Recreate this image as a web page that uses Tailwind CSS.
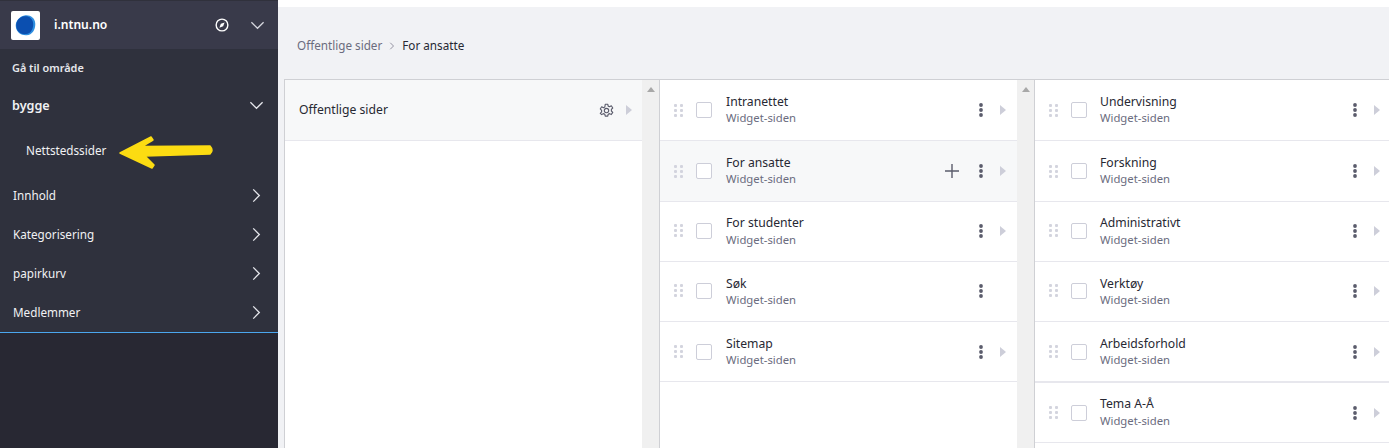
<!DOCTYPE html>
<html lang="no">
<head>
    <meta charset="UTF-8">
    <title>Nettstedssider</title>
    <script src="https://cdn.jsdelivr.net/npm/@tailwindcss/browser@4"></script>
</head>
<body class="overflow-hidden bg-white font-['Noto_Sans',sans-serif] text-[12.2px] text-[#272833]">
<svg width="0" height="0" class="absolute">
    <symbol id="down" viewBox="0 0 16 16"><path d="M1.500 4.500l6.500 6.500 6.500-6.500" fill="none" stroke="currentColor" stroke-width="1.400"/></symbol>
    <symbol id="right" viewBox="0 0 16 16"><path d="M4.500 1.500l6.500 6.500-6.500 6.500" fill="none" stroke="currentColor" stroke-width="1.400"/></symbol>
    <symbol id="caret" viewBox="0 0 6 10"><path d="M0 0l6 5-6 5z" fill="#cdced9"/></symbol>
    <symbol id="dots" viewBox="0 0 4 14"><circle cx="2" cy="2" r="1.900"/><circle cx="2" cy="7" r="1.900"/><circle cx="2" cy="12" r="1.900"/></symbol>
    <symbol id="grip" viewBox="0 0 9 13"><g fill="#d3d4de"><rect width="3" height="3" rx="1"/><rect x="6" width="3" height="3" rx="1"/><rect y="5" width="3" height="3" rx="1"/><rect x="6" y="5" width="3" height="3" rx="1"/><rect y="10" width="3" height="3" rx="1"/><rect x="6" y="10" width="3" height="3" rx="1"/></g></symbol>
</svg>

<div class="flex h-[448px] w-[1389px]">
    <!-- sidebar -->
    <aside class="w-[278px] shrink-0 bg-[#282833] text-white">
        <div class="flex h-[49px] items-center border-t border-[#30313c] bg-[#393a4a] pl-[11px] pr-[13px]">
            <div class="flex h-[29px] w-[29px] items-center justify-center rounded-[2px] bg-white">
                <svg width="21" height="21" viewBox="0 0 20 20"><path d="M9 .5c5-1 10 2 10.300 7.500.3 5.500-2.500 11-8.300 11.300C6 19.600 1 16.500.7 10.500.5 6 4 1.500 9 .5z" fill="#2f8fe0"/><path d="M8.500 1.300c4.500-.8 8.500 1.800 8.800 6.700.3 5-2 9.500-6.800 10.200C6 18.800 1.500 16 1.200 10.500 1 6 4 2 8.500 1.300z" fill="#0b4fb0"/></svg>
            </div>
            <span class="ml-[14px] text-[12.100px] font-semibold">i.ntnu.no</span>
            <svg class="ml-auto" width="14" height="14" viewBox="0 0 16 16" fill="none" stroke="#fff" stroke-width="1.600"><circle cx="8" cy="8" r="6.700"/><path d="M11 5 9.300 9.300 5 11 6.700 6.700z" fill="#fff" stroke="none"/></svg>
            <svg class="ml-[21px] text-[#d5d6de]" width="15" height="15"><use href="#down"/></svg>
        </div>
        <div class="bg-[#2f313d]">
            <div class="flex h-[37px] items-center pl-[12px] pt-px text-[10.900px] font-semibold text-[#e6e7ec]">Gå til område</div>
            <div class="flex h-[39px] items-center justify-between pl-[12px] pr-[14px] text-[12.600px] font-semibold text-[#f1f1f4]"><span class="pt-px">bygge</span> <svg class="text-[#e6e7ec]" width="15" height="15"><use href="#down"/></svg></div>
            <div class="flex h-[51px] items-center pl-[26px] text-[11.700px] text-[#f1f1f4]">Nettstedssider</div>
            <div class="flex h-[39px] items-center justify-between pl-[13px] pr-[14px] text-[11.700px] text-[#f1f1f4]">Innhold <svg class="text-[#e6e7ec]" width="15" height="15"><use href="#right"/></svg></div>
            <div class="flex h-[39px] items-center justify-between pl-[13px] pr-[14px] text-[11.700px] text-[#f1f1f4]">Kategorisering <svg class="text-[#e6e7ec]" width="15" height="15"><use href="#right"/></svg></div>
            <div class="flex h-[39px] items-center justify-between pl-[13px] pr-[14px] text-[11.700px] text-[#f1f1f4]">papirkurv <svg class="text-[#e6e7ec]" width="15" height="15"><use href="#right"/></svg></div>
            <div class="flex h-[39px] items-center justify-between pl-[13px] pr-[14px] text-[11.700px] text-[#f1f1f4]">Medlemmer <svg class="text-[#e6e7ec]" width="15" height="15"><use href="#right"/></svg></div>
        </div>
        <div class="h-px bg-[#4ba6ee]"></div>
    </aside>

    <!-- main -->
    <main class="flex min-w-0 flex-1 flex-col pt-[7px]">
        <div class="flex-1 overflow-hidden bg-[#f1f2f5] pl-[6px]">
            <div class="flex h-[72px] items-center pl-[13px] pt-[5px] text-[11.700px]">
                <span class="text-[#6b6c7e]">Offentlige sider</span>
                <svg class="mx-[6px] text-[#6b6c7e]" width="8" height="8"><use href="#right"/></svg>
                <span>For ansatte</span>
            </div>
            <div class="flex h-[369px] border-t border-l border-[#cfd0d4] bg-white">
                <!-- column 1 -->
                <div class="flex w-[375px] shrink-0 border-r border-[#cfd0d4]">
                    <div class="flex-1">
                        <div class="flex h-[61px] items-center border-b border-[#e7e7ed] bg-[#f7f8f9] pl-[14px] pr-[10px]">
                            <span>Offentlige sider</span>
                            <svg class="ml-auto" width="15" height="15" viewBox="0 0 24 24" fill="none" stroke="#5b5c6c" stroke-width="1.800"><circle cx="12" cy="12" r="3.500"/><path d="M10 2h4l.7 3 2.200 1 2.800-1.500 2.300 3.500-2.200 2.200v2.600l2.200 2.200-2.300 3.500-2.800-1.500-2.200 1-.7 3h-4l-.7-3-2.200-1-2.800 1.500L2 16.500l2.200-2.200v-2.600L2 9.500 4.300 6l2.800 1.500 2.200-1z" stroke-linejoin="round"/></svg>
                            <svg class="ml-[12px]" width="6" height="10"><use href="#caret"/></svg>
                        </div>
                    </div>
                    <div class="w-[17px] shrink-0 bg-[#f0f0f0] pt-[7px]">
                        <div class="mx-auto h-0 w-0 border-x-[4px] border-b-[5px] border-x-transparent border-b-[#a8a8a8]"></div>
                    </div>
                </div>

                <!-- column 2 -->
                <div class="flex w-[375px] shrink-0 border-r border-[#cfd0d4]">
                    <div class="flex-1">
                        <div class="flex h-[61px] items-center border-b border-[#e7e7ed] pl-[14px] pr-[11px]">
                            <svg width="9" height="13"><use href="#grip"/></svg>
                            <span class="ml-[13px] h-[16px] w-[16px] rounded-[2px] border border-[#cdced9] bg-white"></span>
                            <div class="ml-[14px] pb-px leading-[16px]"><div>Intranettet</div><div class="text-[11.300px] text-[#6b6c7e]">Widget-siden</div></div>
                            <svg class="ml-auto text-[#5b5c6c]" width="4" height="14" fill="currentColor"><use href="#dots"/></svg>
                            <svg class="ml-[17px]" width="6" height="10"><use href="#caret"/></svg>
                        </div>
                        <div class="flex h-[61px] items-center border-b border-[#e7e7ed] bg-[#f7f8f9] pl-[14px] pr-[11px]">
                            <svg width="9" height="13"><use href="#grip"/></svg>
                            <span class="ml-[13px] h-[16px] w-[16px] rounded-[2px] border border-[#cdced9] bg-white"></span>
                            <div class="ml-[14px] pb-px leading-[16px]"><div>For ansatte</div><div class="text-[11.300px] text-[#6b6c7e]">Widget-siden</div></div>
                            <svg class="ml-auto" width="14" height="14" viewBox="0 0 14 14" stroke="#5b5c6c" stroke-width="1.400"><path d="M7 0v14M0 7h14"/></svg>
                            <svg class="ml-[20px] text-[#5b5c6c]" width="4" height="14" fill="currentColor"><use href="#dots"/></svg>
                            <svg class="ml-[17px]" width="6" height="10"><use href="#caret"/></svg>
                        </div>
                        <div class="flex h-[60px] items-center border-b border-[#e7e7ed] pb-[2px] pl-[14px] pr-[11px]">
                            <svg width="9" height="13"><use href="#grip"/></svg>
                            <span class="ml-[13px] h-[16px] w-[16px] rounded-[2px] border border-[#cdced9] bg-white"></span>
                            <div class="ml-[14px] pt-[2px] leading-[16px]"><div>For studenter</div><div class="mt-px text-[11.300px] text-[#6b6c7e]">Widget-siden</div></div>
                            <svg class="ml-auto text-[#5b5c6c]" width="4" height="14" fill="currentColor"><use href="#dots"/></svg>
                            <svg class="ml-[17px]" width="6" height="10"><use href="#caret"/></svg>
                        </div>
                        <div class="flex h-[60px] items-center border-b border-[#e7e7ed] pb-[2px] pl-[14px] pr-[11px]">
                            <svg width="9" height="13"><use href="#grip"/></svg>
                            <span class="ml-[13px] h-[16px] w-[16px] rounded-[2px] border border-[#cdced9] bg-white"></span>
                            <div class="ml-[14px] pt-[3px] leading-[16px]"><div>Søk</div><div class="text-[11.300px] text-[#6b6c7e]">Widget-siden</div></div>
                            <svg class="ml-auto mr-[23px] text-[#5b5c6c]" width="4" height="14" fill="currentColor"><use href="#dots"/></svg>
                        </div>
                        <div class="flex h-[60px] items-center border-b border-[#e7e7ed] pl-[14px] pr-[11px]">
                            <svg width="9" height="13"><use href="#grip"/></svg>
                            <span class="ml-[13px] h-[16px] w-[16px] rounded-[2px] border border-[#cdced9] bg-white"></span>
                            <div class="ml-[14px] pt-px leading-[16px]"><div>Sitemap</div><div class="text-[11.300px] text-[#6b6c7e]">Widget-siden</div></div>
                            <svg class="ml-auto text-[#5b5c6c]" width="4" height="14" fill="currentColor"><use href="#dots"/></svg>
                            <svg class="ml-[17px]" width="6" height="10"><use href="#caret"/></svg>
                        </div>
                    </div>
                    <div class="w-[17px] shrink-0 bg-[#f0f0f0] pt-[7px]">
                        <div class="mx-auto h-0 w-0 border-x-[4px] border-b-[5px] border-x-transparent border-b-[#a8a8a8]"></div>
                    </div>
                </div>

                <!-- column 3 -->
                <div class="flex-1">
                    <div class="flex h-[61px] items-center border-b border-[#e7e7ed] pl-[14px] pr-[9px]">
                        <svg width="9" height="13"><use href="#grip"/></svg>
                        <span class="ml-[13px] h-[16px] w-[16px] rounded-[2px] border border-[#cdced9] bg-white"></span>
                        <div class="ml-[13px] pb-px leading-[16px]"><div>Undervisning</div><div class="text-[11.300px] text-[#6b6c7e]">Widget-siden</div></div>
                        <svg class="ml-auto text-[#5b5c6c]" width="4" height="14" fill="currentColor"><use href="#dots"/></svg>
                        <svg class="ml-[17px]" width="6" height="10"><use href="#caret"/></svg>
                    </div>
                    <div class="flex h-[61px] items-center border-b border-[#e7e7ed] pl-[14px] pr-[9px]">
                        <svg width="9" height="13"><use href="#grip"/></svg>
                        <span class="ml-[13px] h-[16px] w-[16px] rounded-[2px] border border-[#cdced9] bg-white"></span>
                        <div class="ml-[13px] pb-px leading-[16px]"><div>Forskning</div><div class="text-[11.300px] text-[#6b6c7e]">Widget-siden</div></div>
                        <svg class="ml-auto text-[#5b5c6c]" width="4" height="14" fill="currentColor"><use href="#dots"/></svg>
                        <svg class="ml-[17px]" width="6" height="10"><use href="#caret"/></svg>
                    </div>
                    <div class="flex h-[60px] items-center border-b border-[#e7e7ed] pb-[2px] pl-[14px] pr-[9px]">
                        <svg width="9" height="13"><use href="#grip"/></svg>
                        <span class="ml-[13px] h-[16px] w-[16px] rounded-[2px] border border-[#cdced9] bg-white"></span>
                        <div class="ml-[13px] pt-[2px] leading-[16px]"><div>Administrativt</div><div class="mt-px text-[11.300px] text-[#6b6c7e]">Widget-siden</div></div>
                        <svg class="ml-auto text-[#5b5c6c]" width="4" height="14" fill="currentColor"><use href="#dots"/></svg>
                        <svg class="ml-[17px]" width="6" height="10"><use href="#caret"/></svg>
                    </div>
                    <div class="flex h-[60px] items-center border-b border-[#e7e7ed] pb-[2px] pl-[14px] pr-[9px]">
                        <svg width="9" height="13"><use href="#grip"/></svg>
                        <span class="ml-[13px] h-[16px] w-[16px] rounded-[2px] border border-[#cdced9] bg-white"></span>
                        <div class="ml-[13px] pt-[3px] leading-[16px]"><div>Verktøy</div><div class="text-[11.300px] text-[#6b6c7e]">Widget-siden</div></div>
                        <svg class="ml-auto text-[#5b5c6c]" width="4" height="14" fill="currentColor"><use href="#dots"/></svg>
                        <svg class="ml-[17px]" width="6" height="10"><use href="#caret"/></svg>
                    </div>
                    <div class="flex h-[61px] items-center border-b-2 border-[#e7e7ed] pl-[14px] pr-[9px]">
                        <svg width="9" height="13"><use href="#grip"/></svg>
                        <span class="ml-[13px] h-[16px] w-[16px] rounded-[2px] border border-[#cdced9] bg-white"></span>
                        <div class="ml-[13px] pt-px leading-[16px]"><div>Arbeidsforhold</div><div class="text-[11.300px] text-[#6b6c7e]">Widget-siden</div></div>
                        <svg class="ml-auto text-[#5b5c6c]" width="4" height="14" fill="currentColor"><use href="#dots"/></svg>
                        <svg class="ml-[17px]" width="6" height="10"><use href="#caret"/></svg>
                    </div>
                    <div class="flex h-[60px] items-center border-b border-[#e7e7ed] pl-[14px] pr-[9px]">
                        <svg width="9" height="13"><use href="#grip"/></svg>
                        <span class="ml-[13px] h-[16px] w-[16px] rounded-[2px] border border-[#cdced9] bg-white"></span>
                        <div class="ml-[13px] leading-[16px]"><div>Tema A-Å</div><div class="mt-px text-[11.300px] text-[#6b6c7e]">Widget-siden</div></div>
                        <svg class="ml-auto text-[#5b5c6c]" width="4" height="14" fill="currentColor"><use href="#dots"/></svg>
                        <svg class="ml-[17px]" width="6" height="10"><use href="#caret"/></svg>
                    </div>
                </div>
            </div>
        </div>
    </main>
</div>

<!-- gul pil over sidemenyen -->
<svg class="absolute left-[115px] top-[130px]" width="105" height="42" viewBox="0 0 105 42">
    <path d="M5 23 L36 7 L38 10 L27 16.500 L95 16 Q99 20.500 95 24 L30 26 L39 35 L37 38 Z" fill="#fcdc12" stroke="#fcdc12" stroke-width="1.500" stroke-linejoin="round"/>
</svg>
</body>
</html>
